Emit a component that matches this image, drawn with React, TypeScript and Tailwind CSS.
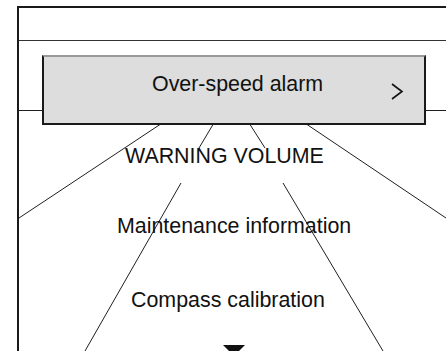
import React from "react";

export default function App() {
  return (
    <div
      className="relative w-[446px] h-[351px] overflow-hidden bg-white text-[#111]"
      style={{ fontFamily: '"Liberation Sans", Arial, sans-serif' }}
    >
      <svg
        className="absolute left-0 top-0 pointer-events-none"
        width="446"
        height="351"
        viewBox="0 0 446 351"
      >
        <g stroke="#1f1f1f" strokeWidth="1" fill="none">
          <line x1="19" y1="110.5" x2="42" y2="110.5" />
          <line x1="426" y1="110.5" x2="446" y2="110.5" />
          <line x1="160" y1="124.5" x2="19" y2="218" />
          <line x1="307" y1="124.5" x2="446" y2="218" />
          <line x1="213" y1="124.5" x2="199" y2="148" />
          <line x1="250" y1="124.5" x2="265" y2="148" />
          <line x1="181" y1="183" x2="85" y2="351" />
          <line x1="283" y1="183" x2="383" y2="351" />
        </g>
      </svg>

      <div className="relative pt-[6px]">
        <div className="ml-[17px] h-[345px] border-l-2 border-t-2 border-[#1a1a1a] flex flex-col">
          <div className="h-[33px] border-b border-[#333] shrink-0" />
          <div className="flex flex-col">
            <div className="relative ml-[23px] mt-[14px] w-[384px] h-[70px] bg-[#dcdddc] border-2 border-[#1a1a1a] border-t-[#9a9a9a]">
              <div className="pt-[15px] pl-[108px] text-[21.4px] leading-[24px] whitespace-nowrap">
                Over-speed alarm
              </div>
              <svg
                className="absolute left-[346px] top-[26px]"
                width="14"
                height="17"
                viewBox="0 0 14 17"
              >
                <polyline
                  points="2,1 12,8.5 2,16"
                  fill="none"
                  stroke="#111"
                  strokeWidth="1.6"
                />
              </svg>
            </div>
            <div className="mt-[19px] pl-[106px] text-[21.4px] leading-[24px] whitespace-nowrap">
              WARNING VOLUME
            </div>
            <div className="mt-[46px] pl-[98px] text-[21.4px] leading-[24px] whitespace-nowrap">
              Maintenance information
            </div>
            <div className="mt-[50px] pl-[112px] text-[21.4px] leading-[24px] whitespace-nowrap">
              Compass calibration
            </div>
            <div className="mt-[33px] pl-[204px]">
              <svg width="22" height="12" viewBox="0 0 22 12">
                <polygon points="0,0 22,0 11,11" fill="#111" />
              </svg>
            </div>
          </div>
        </div>
      </div>
    </div>
  );
}
